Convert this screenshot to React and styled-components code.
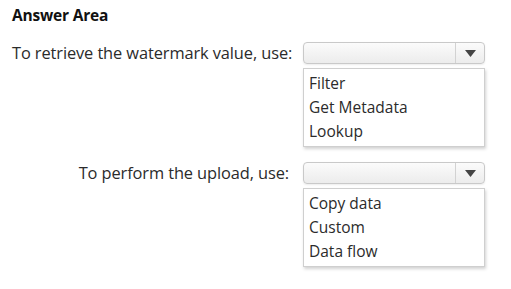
import React from "react";
import styled, { createGlobalStyle } from "styled-components";

const Global = createGlobalStyle`
  html, body { margin: 0; padding: 0; background: #ffffff; }
  body { font-family: "Open Sans", "Noto Sans", sans-serif; color: #2b2b2b; }
`;

const Page = styled.div`
  padding: 4px 0 0 12px;
  width: 511px;
  height: 289px;
  box-sizing: border-box;
`;

const Title = styled.div`
  font-weight: 700;
  font-size: 15.5px;
  line-height: 22px;
  color: #111;
  margin-bottom: 16px;
  letter-spacing: -0.2px;
`;

const Rows = styled.div`
  display: flex;
  flex-direction: column;
  gap: 15px;
`;

const Row = styled.div`
  display: grid;
  grid-template-columns: 277px 182px;
  column-gap: 14px;
  align-items: start;
  margin-left: -4px;
  padding-left: 4px;
`;

const Label = styled.div`
  text-align: right;
  font-size: 16.4px;
  line-height: 22px;
  white-space: nowrap;
  letter-spacing: -0.1px;
`;

const Control = styled.div`
  display: flex;
  flex-direction: column;
  gap: 4px;
`;

const Select = styled.div`
  height: 22px;
  box-sizing: border-box;
  border: 1px solid #c9c9c9;
  border-radius: 4px;
  background: linear-gradient(#fbfbfb, #ececec);
  box-shadow: 0 1px 2px rgba(0, 0, 0, 0.08);
  display: flex;
  justify-content: flex-end;
`;

const ArrowBox = styled.div`
  width: 28px;
  border-left: 1px solid #d2d2d2;
  display: flex;
  align-items: center;
  justify-content: center;
`;

const List = styled.div`
  border: 1px solid #cfcfcf;
  background: #fff;
  box-shadow: 1px 2px 3px rgba(0, 0, 0, 0.18);
  padding: 2px 0 3px;
`;

const Item = styled.div`
  font-size: 15.5px;
  line-height: 24px;
  padding-left: 5px;
  color: #2b2b2b;
`;

const Arrow = () => (
  <svg width="11" height="7" viewBox="0 0 11 7">
    <path d="M0 0 H11 L5.5 7 Z" fill="#444" />
  </svg>
);

const Question = ({ label, options }) => (
  <Row>
    <Label>{label}</Label>
    <Control>
      <Select>
        <ArrowBox>
          <Arrow />
        </ArrowBox>
      </Select>
      <List>
        {options.map((o) => (
          <Item key={o}>{o}</Item>
        ))}
      </List>
    </Control>
  </Row>
);

export default function App() {
  return (
    <Page>
      <Global />
      <Title>Answer Area</Title>
      <Rows>
        <Question
          label="To retrieve the watermark value, use:"
          options={["Filter", "Get Metadata", "Lookup"]}
        />
        <Question
          label="To perform the upload, use:"
          options={["Copy data", "Custom", "Data flow"]}
        />
      </Rows>
    </Page>
  );
}
